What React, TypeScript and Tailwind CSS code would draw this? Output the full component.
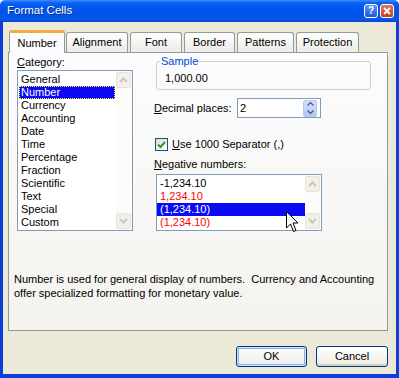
const categories = [
  "General",
  "Number",
  "Currency",
  "Accounting",
  "Date",
  "Time",
  "Percentage",
  "Fraction",
  "Scientific",
  "Text",
  "Special",
  "Custom",
];

const negatives = [
  { label: "-1,234.10", red: false, selected: false },
  { label: "1,234.10", red: true, selected: false },
  { label: "(1,234.10)", red: false, selected: true },
  { label: "(1,234.10)", red: true, selected: false },
];

const tabs = [
  { label: "Number", cls: "ml-[1px] w-[56px]", active: true },
  { label: "Alignment", cls: "ml-[1px] w-[62px]", active: false },
  { label: "Font", cls: "ml-[2px] w-[52px]", active: false },
  { label: "Border", cls: "ml-[2px] w-[51px]", active: false },
  { label: "Patterns", cls: "ml-[2px] w-[57px]", active: false },
  { label: "Protection", cls: "ml-[2px] w-[63px]", active: false },
];

function Chevron({ up }: { up: boolean }) {
  return (
    <svg width="9" height="6" viewBox="0 0 9 6">
      <path
        d={up ? "M1 5 L4.5 1.5 L8 5" : "M1 1 L4.5 4.5 L8 1"}
        fill="none"
        stroke="#C9C7BA"
        strokeWidth="2"
      />
    </svg>
  );
}

function ScrollBar() {
  return (
    <div className="flex w-[16px] flex-col justify-between bg-[#FCFCFA] py-[1px]">
      <div className="flex h-[16px] w-[15px] items-center justify-center rounded-[2px] border border-[#E6E4DA] bg-[#F1F0EA]">
        <Chevron up />
      </div>
      <div className="flex h-[16px] w-[15px] items-center justify-center rounded-[2px] border border-[#E6E4DA] bg-[#F1F0EA]">
        <Chevron up={false} />
      </div>
    </div>
  );
}

export default function App() {
  return (
    <div className="relative flex h-[378px] w-[399px] flex-col overflow-hidden bg-white font-['Liberation_Sans',Arial,sans-serif] text-[11px] text-black">
      {/* title bar */}
      <div className="flex h-[22px] items-center rounded-t-[5px] bg-[linear-gradient(to_bottom,#3C8EFE_0%,#0F63F4_12%,#0058EE_30%,#0055E8_70%,#0A57E8_90%,#0641C8_100%)] pl-[7px] pr-[5px]">
        <span className="text-[11.5px] leading-none text-white [text-shadow:1px_1px_0_#0A2A8A]">Format Cells</span>
        <div className="ml-auto flex gap-[2px]">
          <div className="flex h-[14px] w-[14px] items-center justify-center rounded-[3px] border border-white bg-gradient-to-b from-[#5A95F7] to-[#1D55D8] text-[10px] font-bold leading-none text-white">
            ?
          </div>
          <div className="flex h-[14px] w-[14px] items-center justify-center rounded-[3px] border border-white bg-gradient-to-b from-[#EA7452] to-[#C8391A]">
            <svg width="8" height="8" viewBox="0 0 8 8">
              <path d="M1 1 L7 7 M7 1 L1 7" stroke="white" strokeWidth="1.8" />
            </svg>
          </div>
        </div>
      </div>

      {/* frame + body */}
      <div className="flex flex-1 bg-[#0A3FDA] px-[3px] pb-[4px]">
        <div className="flex flex-1 flex-col bg-[#ECE9D8] pl-[5px] pr-[8px] pt-[8px] pb-[7px]">
          {/* tabs */}
          <div className="flex h-[22px] items-end">
            {tabs.map((t) =>
              t.active ? (
                <div
                  key={t.label}
                  className={`${t.cls} relative z-10 -mb-px flex h-[23px] items-center justify-center rounded-t-[3px] border-x border-t-[3px] border-x-[#919B9C] border-t-[#F2AC45] bg-[#FCFCFE]`}
                >
                  {t.label}
                </div>
              ) : (
                <div
                  key={t.label}
                  className={`${t.cls} flex h-[20px] items-center justify-center rounded-t-[3px] border-x border-t border-[#919B9C] bg-gradient-to-b from-white to-[#ECEBE6]`}
                >
                  {t.label}
                </div>
              )
            )}
          </div>

          {/* panel */}
          <div className="flex h-[279px] w-[380px] flex-col border border-[#919B9C] bg-gradient-to-b from-[#FCFCFE] to-[#F4F3EE]">
            <div className="flex pl-[8px] pt-[3px]">
              {/* category */}
              <div className="flex w-[116px] flex-col">
                <div className="h-[13px] leading-[13px]">
                  <span className="underline">C</span>ategory:
                </div>
                <div className="mt-[1px] flex h-[161px] border border-[#7F9DB9] bg-white">
                  <div className="flex-1 px-[1px] pt-[2px]">
                    {categories.map((c) =>
                      c === "Number" ? (
                        <div
                          key={c}
                          className="flex h-[13px] items-center border border-dotted border-[#FFFF00] bg-[#0A0AF5] pl-[1px] text-white"
                        >
                          {c}
                        </div>
                      ) : (
                        <div key={c} className="h-[13px] pl-[2px] leading-[13px]">
                          {c}
                        </div>
                      )
                    )}
                  </div>
                  <ScrollBar />
                </div>
              </div>

              {/* right side */}
              <div className="ml-[21px] flex flex-col">
                <fieldset className="-mt-px ml-[2px] w-[215px] rounded-[3px] border border-[#D0D0BF] pb-[4px]">
                  <legend className="ml-[3px] px-[1px] leading-[13px] text-[#0046D5]">Sample</legend>
                  <div className="pl-[8px] pt-[4px] leading-[13px]">1,000.00</div>
                </fieldset>

                <div className="mt-[8px] flex h-[20px] items-center">
                  <div className="w-[83px]">
                    <span className="underline">D</span>ecimal places:
                  </div>
                  <div className="flex h-[20px] w-[84px] items-center border border-[#7F9DB9] bg-white pl-[2px]">
                    <span>2</span>
                    <div className="ml-auto mr-[3px] flex h-[17px] w-[14px] flex-col overflow-hidden rounded-[2px] border border-[#B5C9F3] bg-gradient-to-b from-[#D4E0FD] to-[#B3C6F3]">
                      <div className="flex flex-1 items-center justify-center border-b border-[#C7D6F8]">
                        <svg width="7" height="4" viewBox="0 0 7 4">
                          <path d="M0.5 3.5 L3.5 0.5 L6.5 3.5" fill="none" stroke="#4D6185" strokeWidth="1.4" />
                        </svg>
                      </div>
                      <div className="flex flex-1 items-center justify-center">
                        <svg width="7" height="4" viewBox="0 0 7 4">
                          <path d="M0.5 0.5 L3.5 3.5 L6.5 0.5" fill="none" stroke="#4D6185" strokeWidth="1.4" />
                        </svg>
                      </div>
                    </div>
                  </div>
                </div>

                <div className="mt-[20px] flex h-[13px] items-center">
                  <div className="ml-[1px] flex h-[13px] w-[13px] items-center justify-center border border-[#1C5180] bg-gradient-to-br from-[#DCDCD7] to-white">
                    <svg width="9" height="9" viewBox="0 0 9 9">
                      <path d="M1 4.5 L3.5 7 L8 2" fill="none" stroke="#21A121" strokeWidth="2" />
                    </svg>
                  </div>
                  <span className="ml-[4px] leading-[13px]">
                    <span className="underline">U</span>se 1000 Separator (,)
                  </span>
                </div>

                <div className="mt-[7px] h-[13px] leading-[13px]">
                  <span className="underline">N</span>egative numbers:
                </div>

                <div className="ml-[2px] mt-[3px] flex h-[57px] w-[166px] border border-[#7F9DB9] bg-white">
                  <div className="flex-1 pt-[2px]">
                    {negatives.map((n, i) => (
                      <div
                        key={i}
                        className={
                          n.selected
                            ? "h-[13px] bg-[#0A0AF5] pl-[3px] leading-[13px] text-white"
                            : n.red
                            ? "h-[13px] pl-[3px] leading-[13px] text-[#FF0000]"
                            : "h-[13px] pl-[3px] leading-[13px]"
                        }
                      >
                        {n.label}
                      </div>
                    ))}
                  </div>
                  <ScrollBar />
                </div>
              </div>
            </div>

            <p className="mt-[41px] pl-[5px] leading-[14px]">
              Number is used for general display of numbers.&nbsp; Currency and Accounting
              <br />
              offer specialized formatting for monetary value.
            </p>
          </div>

          {/* buttons */}
          <div className="mt-[15px] flex justify-end gap-[9px]">
            <button className="flex h-[21px] w-[71px] items-center justify-center rounded-[3px] border border-[#003C74] bg-gradient-to-b from-white to-[#ECEBE6] shadow-[inset_0_0_0_1px_#CEE0FB,inset_0_0_0_2px_#8FB0EA]">
              OK
            </button>
            <button className="flex h-[21px] w-[72px] items-center justify-center rounded-[3px] border border-[#003C74] bg-gradient-to-b from-white to-[#ECEBE6] shadow-[inset_0_-2px_0_#D8D2C6]">
              Cancel
            </button>
          </div>
        </div>
      </div>

      {/* mouse pointer */}
      <svg className="absolute left-[286px] top-[211px]" width="13" height="22" viewBox="0 0 13 22">
        <path
          d="M0.5 0.5 V17 L4.5 13 L7.5 20.5 L10 19.5 L7 12 H12 Z"
          fill="white"
          stroke="black"
          strokeWidth="1"
        />
      </svg>
    </div>
  );
}
